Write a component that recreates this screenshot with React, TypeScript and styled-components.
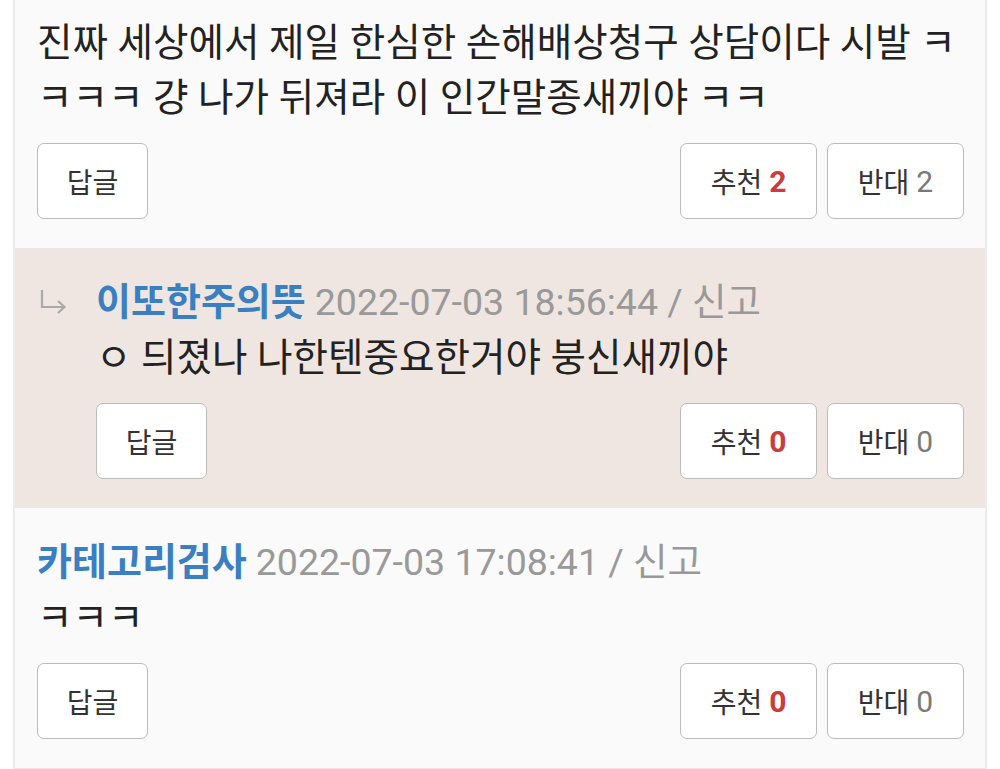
import styled, { createGlobalStyle } from 'styled-components';

const GlobalStyle = createGlobalStyle`
  html, body {
    margin: 0;
    padding: 0;
    background: #ffffff;
  }
  body {
    font-family: Roboto, "Noto Sans CJK KR", "Noto Sans", sans-serif;
    color: #222222;
  }
`;

const List = styled.div`
  margin-left: 13px;
  width: 970px;
  background: #fafafa;
  border-left: 2px solid #ececec;
  border-right: 2px solid #ececec;
  border-bottom: 2px solid #e6e6e6;
  overflow: hidden;
`;

const Comment = styled.div<{ $reply?: boolean; $top?: number }>`
  display: flex;
  flex-direction: row;
  padding: ${(p) => p.$top ?? 27}px 21px 29px ${(p) => (p.$reply ? 24 : 22)}px;
  background: ${(p) => (p.$reply ? '#efe6e1' : 'transparent')};
`;

const ArrowCell = styled.div`
  width: 57px;
  flex: 0 0 57px;
  height: 55px;
  display: flex;
  align-items: center;
`;

const Body = styled.div`
  flex: 1;
  display: flex;
  flex-direction: column;
  min-width: 0;
`;

const Header = styled.div`
  line-height: 55px;
  font-size: 38px;
  white-space: nowrap;
`;

const Name = styled.span`
  color: #3a7fc1;
  font-weight: 700;
  margin-right: 9px;
`;

const Meta = styled.span`
  color: #999999;
  font-size: 37.5px;
`;

const Text = styled.div`
  font-size: 38.6px;
  line-height: 55px;
  color: #222222;
`;

const Actions = styled.div`
  display: flex;
  flex-direction: row;
  align-items: center;
  margin-top: 18px;
`;

const Votes = styled.div`
  margin-left: auto;
  display: flex;
  gap: 10px;
`;

const Button = styled.button<{ $width: number }>`
  width: ${(p) => p.$width}px;
  height: 76px;
  background: #ffffff;
  border: 1.5px solid #bbbbbb;
  border-radius: 7px;
  font-family: Roboto, "Noto Sans CJK KR", sans-serif;
  font-size: 28px;
  color: #333333;
  display: flex;
  align-items: center;
  justify-content: center;
  gap: 7px;
  padding: 0;
`;

const Count = styled.span<{ $up?: boolean }>`
  color: ${(p) => (p.$up ? '#cf3a3a' : '#7a7a7a')};
  font-weight: ${(p) => (p.$up ? 700 : 400)};
  font-size: 30px;
`;

type Item = {
  name?: string;
  date?: string;
  text: string;
  up: number;
  down: number;
  reply?: boolean;
  top?: number;
};

const items: Item[] = [
  {
    text: '진짜 세상에서 제일 한심한 손해배상청구 상담이다 시발 ㅋㅋㅋㅋ 걍 나가 뒤져라 이 인간말종새끼야 ㅋㅋ',
    up: 2,
    down: 2,
    top: 15,
  },
  {
    name: '이또한주의뜻',
    date: '2022-07-03 18:56:44',
    text: 'ㅇ 듸졌나 나한텐중요한거야 붕신새끼야',
    up: 0,
    down: 0,
    reply: true,
  },
  {
    name: '카테고리검사',
    date: '2022-07-03 17:08:41',
    text: 'ㅋㅋㅋ',
    up: 0,
    down: 0,
  },
];

function ReplyArrow() {
  return (
    <svg width="30" height="28" viewBox="0 0 30 28" fill="none" stroke="#a9a9a9" strokeWidth="2.2">
      <path d="M3 1 V18 H25" />
      <path d="M19 12 L25.5 18 L19 24" strokeLinejoin="miter" />
    </svg>
  );
}

export default function App() {
  return (
    <>
      <GlobalStyle />
      <List>
        {items.map((item, index) => (
          <Comment key={index} $reply={item.reply} $top={item.top}>
            {item.reply && (
              <ArrowCell>
                <ReplyArrow />
              </ArrowCell>
            )}
            <Body>
              {item.name && (
                <Header>
                  <Name>{item.name}</Name>
                  <Meta>{item.date} / 신고</Meta>
                </Header>
              )}
              <Text>{item.text}</Text>
              <Actions>
                <Button $width={111}>답글</Button>
                <Votes>
                  <Button $width={137}>
                    추천<Count $up>{item.up}</Count>
                  </Button>
                  <Button $width={137}>
                    반대<Count>{item.down}</Count>
                  </Button>
                </Votes>
              </Actions>
            </Body>
          </Comment>
        ))}
      </List>
    </>
  );
}
